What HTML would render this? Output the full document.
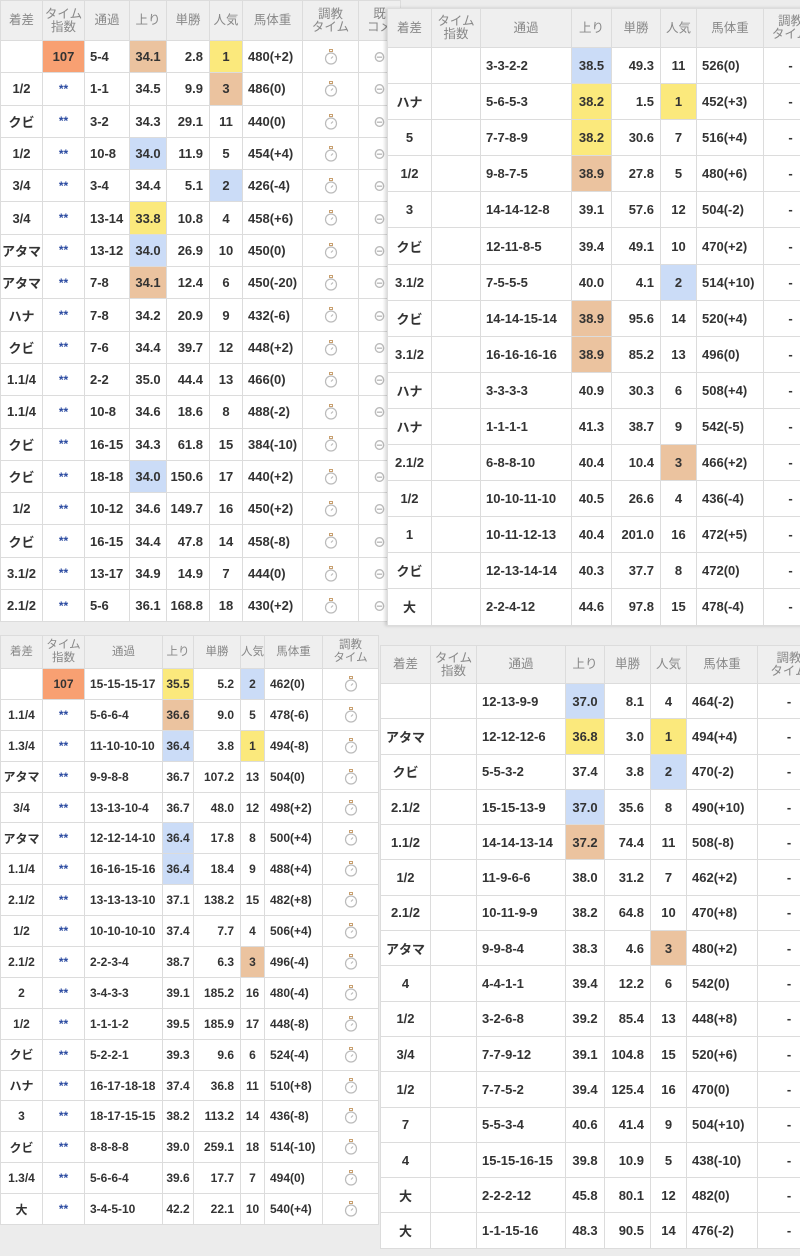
<!DOCTYPE html>
<html><head><meta charset="utf-8"><style>
body{margin:0;width:800px;height:1256px;background:#ececec;position:relative;overflow:hidden;font-family:"Liberation Sans","Noto Sans CJK JP",sans-serif}
table{position:absolute;border-collapse:collapse;table-layout:fixed;background:#fff}
td,th{border:1px solid #dcdcdc;padding:0;font-size:13px;color:#333;font-weight:bold;white-space:nowrap;overflow:hidden}
th{background:#efefef;color:#888;font-weight:normal;font-size:12.5px;line-height:13px;text-align:center}
td{text-align:center}
td.l{text-align:left;padding-left:5px}
td.r{text-align:right;padding-right:6px}
.s{color:#2a4aa0;font-size:12px}
.o{background:#f8a072}.t{background:#ebc39f}.y{background:#fbe97c}.b{background:#cbdcf7}
#A{left:0;top:0;width:400px}#A th{height:39px}#A td{height:31.3px}
#B{left:387px;top:8px;width:430px;box-shadow:-2px 0 3px rgba(0,0,0,.15)}#B th{height:38px}#B td{height:35.1px}
#C{left:0;top:635px;width:378px}#C th{height:32px}#C td{height:29.9px;font-size:12px}#C th{font-size:11.5px}
#D{left:380px;top:645px;width:440px}#D th{height:37px}#D td{height:34.3px}
svg{vertical-align:middle}
</style></head><body>
<svg width="0" height="0" style="position:absolute"><defs><symbol id="w" viewBox="0 0 14 16"><rect x="5.5" y="0.5" width="3" height="2" fill="none" stroke="#c8a070" stroke-width="1"/><circle cx="7" cy="9.5" r="5.5" fill="none" stroke="#bbb" stroke-width="1.2"/><path d="M7 9.5L9 7.5" stroke="#bbb" stroke-width="1.2"/></symbol></defs></svg>

<table id="A"><colgroup><col style="width:42px"><col style="width:42px"><col style="width:45px"><col style="width:37px"><col style="width:43px"><col style="width:33px"><col style="width:60px"><col style="width:56px"><col style="width:42px"></colgroup>
<tr><th>着差</th><th>タイム<br>指数</th><th>通過</th><th>上り</th><th>単勝</th><th>人気</th><th>馬体重</th><th>調教<br>タイム</th><th>既<br>コメ</th></tr>
<tr><td></td><td class="o">107</td><td class="l">5-4</td><td class="t">34.1</td><td class="r">2.8</td><td class="y">1</td><td class="l">480(+2)</td><td><svg width="14" height="16"><use href="#w"/></svg></td><td style="color:#bbb">⊖</td></tr>
<tr><td>1/2</td><td class="s">**</td><td class="l">1-1</td><td>34.5</td><td class="r">9.9</td><td class="t">3</td><td class="l">486(0)</td><td><svg width="14" height="16"><use href="#w"/></svg></td><td style="color:#bbb">⊖</td></tr>
<tr><td>クビ</td><td class="s">**</td><td class="l">3-2</td><td>34.3</td><td class="r">29.1</td><td>11</td><td class="l">440(0)</td><td><svg width="14" height="16"><use href="#w"/></svg></td><td style="color:#bbb">⊖</td></tr>
<tr><td>1/2</td><td class="s">**</td><td class="l">10-8</td><td class="b">34.0</td><td class="r">11.9</td><td>5</td><td class="l">454(+4)</td><td><svg width="14" height="16"><use href="#w"/></svg></td><td style="color:#bbb">⊖</td></tr>
<tr><td>3/4</td><td class="s">**</td><td class="l">3-4</td><td>34.4</td><td class="r">5.1</td><td class="b">2</td><td class="l">426(-4)</td><td><svg width="14" height="16"><use href="#w"/></svg></td><td style="color:#bbb">⊖</td></tr>
<tr><td>3/4</td><td class="s">**</td><td class="l">13-14</td><td class="y">33.8</td><td class="r">10.8</td><td>4</td><td class="l">458(+6)</td><td><svg width="14" height="16"><use href="#w"/></svg></td><td style="color:#bbb">⊖</td></tr>
<tr><td>アタマ</td><td class="s">**</td><td class="l">13-12</td><td class="b">34.0</td><td class="r">26.9</td><td>10</td><td class="l">450(0)</td><td><svg width="14" height="16"><use href="#w"/></svg></td><td style="color:#bbb">⊖</td></tr>
<tr><td>アタマ</td><td class="s">**</td><td class="l">7-8</td><td class="t">34.1</td><td class="r">12.4</td><td>6</td><td class="l">450(-20)</td><td><svg width="14" height="16"><use href="#w"/></svg></td><td style="color:#bbb">⊖</td></tr>
<tr><td>ハナ</td><td class="s">**</td><td class="l">7-8</td><td>34.2</td><td class="r">20.9</td><td>9</td><td class="l">432(-6)</td><td><svg width="14" height="16"><use href="#w"/></svg></td><td style="color:#bbb">⊖</td></tr>
<tr><td>クビ</td><td class="s">**</td><td class="l">7-6</td><td>34.4</td><td class="r">39.7</td><td>12</td><td class="l">448(+2)</td><td><svg width="14" height="16"><use href="#w"/></svg></td><td style="color:#bbb">⊖</td></tr>
<tr><td>1.1/4</td><td class="s">**</td><td class="l">2-2</td><td>35.0</td><td class="r">44.4</td><td>13</td><td class="l">466(0)</td><td><svg width="14" height="16"><use href="#w"/></svg></td><td style="color:#bbb">⊖</td></tr>
<tr><td>1.1/4</td><td class="s">**</td><td class="l">10-8</td><td>34.6</td><td class="r">18.6</td><td>8</td><td class="l">488(-2)</td><td><svg width="14" height="16"><use href="#w"/></svg></td><td style="color:#bbb">⊖</td></tr>
<tr><td>クビ</td><td class="s">**</td><td class="l">16-15</td><td>34.3</td><td class="r">61.8</td><td>15</td><td class="l">384(-10)</td><td><svg width="14" height="16"><use href="#w"/></svg></td><td style="color:#bbb">⊖</td></tr>
<tr><td>クビ</td><td class="s">**</td><td class="l">18-18</td><td class="b">34.0</td><td class="r">150.6</td><td>17</td><td class="l">440(+2)</td><td><svg width="14" height="16"><use href="#w"/></svg></td><td style="color:#bbb">⊖</td></tr>
<tr><td>1/2</td><td class="s">**</td><td class="l">10-12</td><td>34.6</td><td class="r">149.7</td><td>16</td><td class="l">450(+2)</td><td><svg width="14" height="16"><use href="#w"/></svg></td><td style="color:#bbb">⊖</td></tr>
<tr><td>クビ</td><td class="s">**</td><td class="l">16-15</td><td>34.4</td><td class="r">47.8</td><td>14</td><td class="l">458(-8)</td><td><svg width="14" height="16"><use href="#w"/></svg></td><td style="color:#bbb">⊖</td></tr>
<tr><td>3.1/2</td><td class="s">**</td><td class="l">13-17</td><td>34.9</td><td class="r">14.9</td><td>7</td><td class="l">444(0)</td><td><svg width="14" height="16"><use href="#w"/></svg></td><td style="color:#bbb">⊖</td></tr>
<tr><td>2.1/2</td><td class="s">**</td><td class="l">5-6</td><td>36.1</td><td class="r">168.8</td><td>18</td><td class="l">430(+2)</td><td><svg width="14" height="16"><use href="#w"/></svg></td><td style="color:#bbb">⊖</td></tr>
</table>

<table id="B"><colgroup><col style="width:44px"><col style="width:49px"><col style="width:91px"><col style="width:40px"><col style="width:49px"><col style="width:36px"><col style="width:67px"><col style="width:54px"></colgroup>
<tr><th>着差</th><th>タイム<br>指数</th><th>通過</th><th>上り</th><th>単勝</th><th>人気</th><th>馬体重</th><th>調教<br>タイム</th></tr>
<tr><td></td><td></td><td class="l">3-3-2-2</td><td class="b">38.5</td><td class="r">49.3</td><td>11</td><td class="l">526(0)</td><td>-</td></tr>
<tr><td>ハナ</td><td></td><td class="l">5-6-5-3</td><td class="y">38.2</td><td class="r">1.5</td><td class="y">1</td><td class="l">452(+3)</td><td>-</td></tr>
<tr><td>5</td><td></td><td class="l">7-7-8-9</td><td class="y">38.2</td><td class="r">30.6</td><td>7</td><td class="l">516(+4)</td><td>-</td></tr>
<tr><td>1/2</td><td></td><td class="l">9-8-7-5</td><td class="t">38.9</td><td class="r">27.8</td><td>5</td><td class="l">480(+6)</td><td>-</td></tr>
<tr><td>3</td><td></td><td class="l">14-14-12-8</td><td>39.1</td><td class="r">57.6</td><td>12</td><td class="l">504(-2)</td><td>-</td></tr>
<tr><td>クビ</td><td></td><td class="l">12-11-8-5</td><td>39.4</td><td class="r">49.1</td><td>10</td><td class="l">470(+2)</td><td>-</td></tr>
<tr><td>3.1/2</td><td></td><td class="l">7-5-5-5</td><td>40.0</td><td class="r">4.1</td><td class="b">2</td><td class="l">514(+10)</td><td>-</td></tr>
<tr><td>クビ</td><td></td><td class="l">14-14-15-14</td><td class="t">38.9</td><td class="r">95.6</td><td>14</td><td class="l">520(+4)</td><td>-</td></tr>
<tr><td>3.1/2</td><td></td><td class="l">16-16-16-16</td><td class="t">38.9</td><td class="r">85.2</td><td>13</td><td class="l">496(0)</td><td>-</td></tr>
<tr><td>ハナ</td><td></td><td class="l">3-3-3-3</td><td>40.9</td><td class="r">30.3</td><td>6</td><td class="l">508(+4)</td><td>-</td></tr>
<tr><td>ハナ</td><td></td><td class="l">1-1-1-1</td><td>41.3</td><td class="r">38.7</td><td>9</td><td class="l">542(-5)</td><td>-</td></tr>
<tr><td>2.1/2</td><td></td><td class="l">6-8-8-10</td><td>40.4</td><td class="r">10.4</td><td class="t">3</td><td class="l">466(+2)</td><td>-</td></tr>
<tr><td>1/2</td><td></td><td class="l">10-10-11-10</td><td>40.5</td><td class="r">26.6</td><td>4</td><td class="l">436(-4)</td><td>-</td></tr>
<tr><td>1</td><td></td><td class="l">10-11-12-13</td><td>40.4</td><td class="r">201.0</td><td>16</td><td class="l">472(+5)</td><td>-</td></tr>
<tr><td>クビ</td><td></td><td class="l">12-13-14-14</td><td>40.3</td><td class="r">37.7</td><td>8</td><td class="l">472(0)</td><td>-</td></tr>
<tr><td>大</td><td></td><td class="l">2-2-4-12</td><td>44.6</td><td class="r">97.8</td><td>15</td><td class="l">478(-4)</td><td>-</td></tr>
</table>

<table id="C"><colgroup><col style="width:42px"><col style="width:42px"><col style="width:78px"><col style="width:31px"><col style="width:47px"><col style="width:24px"><col style="width:58px"><col style="width:56px"></colgroup>
<tr><th>着差</th><th>タイム<br>指数</th><th>通過</th><th>上り</th><th>単勝</th><th>人気</th><th>馬体重</th><th>調教<br>タイム</th></tr>
<tr><td></td><td class="o">107</td><td class="l">15-15-15-17</td><td class="y">35.5</td><td class="r">5.2</td><td class="b">2</td><td class="l">462(0)</td><td><svg width="14" height="16"><use href="#w"/></svg></td></tr>
<tr><td>1.1/4</td><td class="s">**</td><td class="l">5-6-6-4</td><td class="t">36.6</td><td class="r">9.0</td><td>5</td><td class="l">478(-6)</td><td><svg width="14" height="16"><use href="#w"/></svg></td></tr>
<tr><td>1.3/4</td><td class="s">**</td><td class="l">11-10-10-10</td><td class="b">36.4</td><td class="r">3.8</td><td class="y">1</td><td class="l">494(-8)</td><td><svg width="14" height="16"><use href="#w"/></svg></td></tr>
<tr><td>アタマ</td><td class="s">**</td><td class="l">9-9-8-8</td><td>36.7</td><td class="r">107.2</td><td>13</td><td class="l">504(0)</td><td><svg width="14" height="16"><use href="#w"/></svg></td></tr>
<tr><td>3/4</td><td class="s">**</td><td class="l">13-13-10-4</td><td>36.7</td><td class="r">48.0</td><td>12</td><td class="l">498(+2)</td><td><svg width="14" height="16"><use href="#w"/></svg></td></tr>
<tr><td>アタマ</td><td class="s">**</td><td class="l">12-12-14-10</td><td class="b">36.4</td><td class="r">17.8</td><td>8</td><td class="l">500(+4)</td><td><svg width="14" height="16"><use href="#w"/></svg></td></tr>
<tr><td>1.1/4</td><td class="s">**</td><td class="l">16-16-15-16</td><td class="b">36.4</td><td class="r">18.4</td><td>9</td><td class="l">488(+4)</td><td><svg width="14" height="16"><use href="#w"/></svg></td></tr>
<tr><td>2.1/2</td><td class="s">**</td><td class="l">13-13-13-10</td><td>37.1</td><td class="r">138.2</td><td>15</td><td class="l">482(+8)</td><td><svg width="14" height="16"><use href="#w"/></svg></td></tr>
<tr><td>1/2</td><td class="s">**</td><td class="l">10-10-10-10</td><td>37.4</td><td class="r">7.7</td><td>4</td><td class="l">506(+4)</td><td><svg width="14" height="16"><use href="#w"/></svg></td></tr>
<tr><td>2.1/2</td><td class="s">**</td><td class="l">2-2-3-4</td><td>38.7</td><td class="r">6.3</td><td class="t">3</td><td class="l">496(-4)</td><td><svg width="14" height="16"><use href="#w"/></svg></td></tr>
<tr><td>2</td><td class="s">**</td><td class="l">3-4-3-3</td><td>39.1</td><td class="r">185.2</td><td>16</td><td class="l">480(-4)</td><td><svg width="14" height="16"><use href="#w"/></svg></td></tr>
<tr><td>1/2</td><td class="s">**</td><td class="l">1-1-1-2</td><td>39.5</td><td class="r">185.9</td><td>17</td><td class="l">448(-8)</td><td><svg width="14" height="16"><use href="#w"/></svg></td></tr>
<tr><td>クビ</td><td class="s">**</td><td class="l">5-2-2-1</td><td>39.3</td><td class="r">9.6</td><td>6</td><td class="l">524(-4)</td><td><svg width="14" height="16"><use href="#w"/></svg></td></tr>
<tr><td>ハナ</td><td class="s">**</td><td class="l">16-17-18-18</td><td>37.4</td><td class="r">36.8</td><td>11</td><td class="l">510(+8)</td><td><svg width="14" height="16"><use href="#w"/></svg></td></tr>
<tr><td>3</td><td class="s">**</td><td class="l">18-17-15-15</td><td>38.2</td><td class="r">113.2</td><td>14</td><td class="l">436(-8)</td><td><svg width="14" height="16"><use href="#w"/></svg></td></tr>
<tr><td>クビ</td><td class="s">**</td><td class="l">8-8-8-8</td><td>39.0</td><td class="r">259.1</td><td>18</td><td class="l">514(-10)</td><td><svg width="14" height="16"><use href="#w"/></svg></td></tr>
<tr><td>1.3/4</td><td class="s">**</td><td class="l">5-6-6-4</td><td>39.6</td><td class="r">17.7</td><td>7</td><td class="l">494(0)</td><td><svg width="14" height="16"><use href="#w"/></svg></td></tr>
<tr><td>大</td><td class="s">**</td><td class="l">3-4-5-10</td><td>42.2</td><td class="r">22.1</td><td>10</td><td class="l">540(+4)</td><td><svg width="14" height="16"><use href="#w"/></svg></td></tr>
</table>

<table id="D"><colgroup><col style="width:50px"><col style="width:46px"><col style="width:89px"><col style="width:39px"><col style="width:46px"><col style="width:36px"><col style="width:71px"><col style="width:63px"></colgroup>
<tr><th>着差</th><th>タイム<br>指数</th><th>通過</th><th>上り</th><th>単勝</th><th>人気</th><th>馬体重</th><th>調教<br>タイム</th></tr>
<tr><td></td><td></td><td class="l">12-13-9-9</td><td class="b">37.0</td><td class="r">8.1</td><td>4</td><td class="l">464(-2)</td><td>-</td></tr>
<tr><td>アタマ</td><td></td><td class="l">12-12-12-6</td><td class="y">36.8</td><td class="r">3.0</td><td class="y">1</td><td class="l">494(+4)</td><td>-</td></tr>
<tr><td>クビ</td><td></td><td class="l">5-5-3-2</td><td>37.4</td><td class="r">3.8</td><td class="b">2</td><td class="l">470(-2)</td><td>-</td></tr>
<tr><td>2.1/2</td><td></td><td class="l">15-15-13-9</td><td class="b">37.0</td><td class="r">35.6</td><td>8</td><td class="l">490(+10)</td><td>-</td></tr>
<tr><td>1.1/2</td><td></td><td class="l">14-14-13-14</td><td class="t">37.2</td><td class="r">74.4</td><td>11</td><td class="l">508(-8)</td><td>-</td></tr>
<tr><td>1/2</td><td></td><td class="l">11-9-6-6</td><td>38.0</td><td class="r">31.2</td><td>7</td><td class="l">462(+2)</td><td>-</td></tr>
<tr><td>2.1/2</td><td></td><td class="l">10-11-9-9</td><td>38.2</td><td class="r">64.8</td><td>10</td><td class="l">470(+8)</td><td>-</td></tr>
<tr><td>アタマ</td><td></td><td class="l">9-9-8-4</td><td>38.3</td><td class="r">4.6</td><td class="t">3</td><td class="l">480(+2)</td><td>-</td></tr>
<tr><td>4</td><td></td><td class="l">4-4-1-1</td><td>39.4</td><td class="r">12.2</td><td>6</td><td class="l">542(0)</td><td>-</td></tr>
<tr><td>1/2</td><td></td><td class="l">3-2-6-8</td><td>39.2</td><td class="r">85.4</td><td>13</td><td class="l">448(+8)</td><td>-</td></tr>
<tr><td>3/4</td><td></td><td class="l">7-7-9-12</td><td>39.1</td><td class="r">104.8</td><td>15</td><td class="l">520(+6)</td><td>-</td></tr>
<tr><td>1/2</td><td></td><td class="l">7-7-5-2</td><td>39.4</td><td class="r">125.4</td><td>16</td><td class="l">470(0)</td><td>-</td></tr>
<tr><td>7</td><td></td><td class="l">5-5-3-4</td><td>40.6</td><td class="r">41.4</td><td>9</td><td class="l">504(+10)</td><td>-</td></tr>
<tr><td>4</td><td></td><td class="l">15-15-16-15</td><td>39.8</td><td class="r">10.9</td><td>5</td><td class="l">438(-10)</td><td>-</td></tr>
<tr><td>大</td><td></td><td class="l">2-2-2-12</td><td>45.8</td><td class="r">80.1</td><td>12</td><td class="l">482(0)</td><td>-</td></tr>
<tr><td>大</td><td></td><td class="l">1-1-15-16</td><td>48.3</td><td class="r">90.5</td><td>14</td><td class="l">476(-2)</td><td>-</td></tr>
</table>
</body></html>
